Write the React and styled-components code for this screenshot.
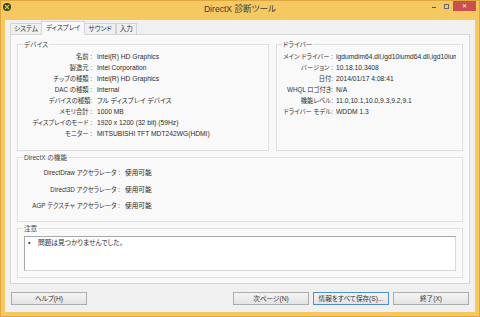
import React from 'react'
import styled, { createGlobalStyle } from 'styled-components'

const GlobalStyle = createGlobalStyle`
  html, body {
    margin: 0;
    padding: 0;
  }
  body {
    font-family: "Liberation Sans", "Noto Sans CJK JP", sans-serif;
    font-feature-settings: "palt";
    color: #2b2b2b;
  }
`

const Window = styled.div`
  width: 480px;
  height: 317px;
  box-sizing: border-box;
  background: #f6c862;
  border: 1px solid #dfa83f;
  display: flex;
  flex-direction: column;
`

const TitleBar = styled.div`
  height: 19px;
  display: grid;
  grid-template-columns: 1fr auto 1fr;
  align-items: start;
`

const AppIcon = styled.svg`
  margin: 2px 0 0 2px;
`

const Title = styled.div`
  font-size: 8.6px;
  line-height: 17px;
  color: #3a3a3a;
`

const Controls = styled.div`
  justify-self: end;
  display: flex;
  align-items: flex-start;
  margin-right: 3px;
`

const CtrlButton = styled.div`
  width: ${(p) => (p.$close ? 23 : 13)}px;
  height: 10px;
  background: ${(p) => (p.$close ? '#c9504c' : 'transparent')};
  display: flex;
  align-items: center;
  justify-content: center;
  color: ${(p) => (p.$close ? '#fff' : '#555')};
  font-size: 6px;
  line-height: 10px;
`

const MinGlyph = styled.div`
  width: 4px;
  height: 1px;
  background: #555;
  margin-top: 3px;
`

const MaxGlyph = styled.div`
  width: 3px;
  height: 3px;
  border: 1px solid #666;
`

const Client = styled.div`
  flex: 1;
  margin: 0 4px 4px 4px;
  background: #f0f0f0;
  padding: 2px 5px 7px 5px;
  display: flex;
  flex-direction: column;
`

const Tabs = styled.div`
  display: flex;
  align-items: flex-end;
  height: 12px;
  position: relative;
  z-index: 1;
`

const Tab = styled.div`
  font-size: 6.6px;
  line-height: ${(p) => (p.$active ? 12 : 10)}px;
  padding: 0 ${(p) => (p.$active ? 4 : 3)}px;
  margin: 0 ${(p) => (p.$active ? -1 : 0)}px;
  border: 1px solid #d4d4d4;
  border-bottom: ${(p) => (p.$active ? '1px solid #f9f9f9' : 'none')};
  background: ${(p) => (p.$active ? '#f9f9f9' : '#f0f0f0')};
  color: #333;
  margin-bottom: ${(p) => (p.$active ? -1 : 0)}px;
  position: relative;
  z-index: ${(p) => (p.$active ? 2 : 1)};
  white-space: nowrap;
`

const Panel = styled.div`
  flex: 1;
  border: 1px solid #d6d6d6;
  background: #f9f9f9;
  padding: 5px 6px 5px 6px;
  display: flex;
  flex-direction: column;
  gap: 2px;
`

const TopRow = styled.div`
  height: 111px;
  display: flex;
  gap: 7px;
`

const Group = styled.fieldset`
  margin: 0;
  min-width: 0;
  border: 1px solid #dedede;
  box-shadow: inset 0 0 0 1px #ffffff;
  padding: 1px 6px 0 0;
  flex: ${(p) => p.$flex || 'none'};
  width: ${(p) => (p.$width ? `${p.$width}px` : 'auto')};
  height: ${(p) => (p.$height ? `${p.$height}px` : 'auto')};
  box-sizing: border-box;
  display: flex;
  flex-direction: column;
`

const Legend = styled.legend`
  font-size: 6.6px;
  line-height: 9px;
  padding: 0 1px;
  margin-left: 5px;
  color: #444;
`

const InfoGrid = styled.div`
  display: grid;
  grid-template-columns: ${(p) => p.$labelWidth}px 1fr;
  column-gap: ${(p) => p.$gap}px;
  font-size: 6.7px;
  line-height: ${(p) => p.$rowHeight}px;
  padding-top: ${(p) => p.$top || 0}px;
`

const Label = styled.div`
  text-align: right;
  white-space: nowrap;
  font-size: 6.3px;
  color: #333;
`

const Value = styled.div`
  white-space: nowrap;
  overflow: hidden;
  color: #2b2b2b;
`

const NoteBox = styled.div`
  flex: 1;
  margin: 2px 0 6px 6px;
  background: #ffffff;
  border: 1px solid #a8a8a8;
  border-right-color: #d8d8d8;
  border-bottom-color: #d8d8d8;
  display: flex;
  align-items: flex-start;
  font-size: 6.7px;
  line-height: 11px;
  padding: 0 0 0 3px;
`

const Bullet = styled.span`
  width: 10px;
  flex-shrink: 0;
`

const ButtonRow = styled.div`
  display: flex;
  gap: 4px;
  margin-top: 8px;
  padding: 0 1px;
`

const Spacer = styled.div`
  flex: 1;
`

const Button = styled.div`
  width: 76px;
  height: 13px;
  box-sizing: border-box;
  border: 1px solid ${(p) => (p.$focused ? '#4f90c8' : '#adadad')};
  background: linear-gradient(#f3f3f3, #e4e4e4);
  font-size: 6.6px;
  line-height: 11px;
  text-align: center;
  color: #333;
`

const device = [
  ['名前 :', 'Intel(R) HD Graphics'],
  ['製造元 :', 'Intel Corporation'],
  ['チップの種類 :', 'Intel(R) HD Graphics'],
  ['DAC の種類 :', 'Internal'],
  ['デバイスの種類:', 'フル ディスプレイ デバイス'],
  ['メモリ合計 :', '1000 MB'],
  ['ディスプレイのモード :', '1920 x 1200 (32 bit) (59Hz)'],
  ['モニター :', 'MITSUBISHI TFT MDT242WG(HDMI)'],
]

const driver = [
  ['メイン ドライバー :', 'igdumdim64.dll,igd10iumd64.dll,igd10iumc'],
  ['バージョン :', '10.18.10.3408'],
  ['日付:', '2014/01/17 4:08:41'],
  ['WHQL ロゴ付き:', 'N/A'],
  ['機能レベル:', '11.0,10.1,10.0,9.3,9.2,9.1'],
  ['ドライバー モデル:', 'WDDM 1.3'],
]

const features = [
  ['DirectDraw アクセラレータ :', '使用可能'],
  ['Direct3D アクセラレータ :', '使用可能'],
  ['AGP テクスチャ アクセラレータ :', '使用可能'],
]

const Rows = ({ items, labelWidth, gap = 5, rowHeight, top }) => (
  <InfoGrid $labelWidth={labelWidth} $gap={gap} $rowHeight={rowHeight} $top={top}>
    {items.map(([k, v]) => (
      <React.Fragment key={k}>
        <Label>{k}</Label>
        <Value>{v}</Value>
      </React.Fragment>
    ))}
  </InfoGrid>
)

const App = () => (
  <>
    <GlobalStyle />
    <Window>
      <TitleBar>
        <AppIcon width="8" height="8" viewBox="0 0 8 8">
          <circle cx="4" cy="4" r="4" fill="#3b3b2a" />
          <path d="M2 2 L6 6 M6 2 L2 6" stroke="#b8d433" strokeWidth="1.4" />
        </AppIcon>
        <Title>DirectX 診断ツール</Title>
        <Controls>
          <CtrlButton>
            <MinGlyph />
          </CtrlButton>
          <CtrlButton>
            <MaxGlyph />
          </CtrlButton>
          <CtrlButton $close>✕</CtrlButton>
        </Controls>
      </TitleBar>
      <Client>
        <Tabs>
          <Tab>システム</Tab>
          <Tab $active>ディスプレイ</Tab>
          <Tab>サウンド</Tab>
          <Tab>入力</Tab>
        </Tabs>
        <Panel>
          <TopRow>
            <Group $width={252}>
              <Legend>デバイス</Legend>
              <Rows items={device} labelWidth={74} rowHeight={11} top={1} />
            </Group>
            <Group $flex="1">
              <Legend>ドライバー</Legend>
              <Rows items={driver} labelWidth={56} gap={3} rowHeight={11} top={1} />
            </Group>
          </TopRow>
          <Group $height={69}>
            <Legend>DirectX の機能</Legend>
            <Rows items={features} labelWidth={102} rowHeight={16.5} top={2} />
          </Group>
          <Group $flex="1">
            <Legend>注意</Legend>
            <NoteBox>
              <Bullet>•</Bullet>
              <span>問題は見つかりませんでした。</span>
            </NoteBox>
          </Group>
        </Panel>
        <ButtonRow>
          <Button>ヘルプ(H)</Button>
          <Spacer />
          <Button>次ページ(N)</Button>
          <Button $focused>情報をすべて保存(S)...</Button>
          <Button>終了(X)</Button>
        </ButtonRow>
      </Client>
    </Window>
  </>
)

export default App
